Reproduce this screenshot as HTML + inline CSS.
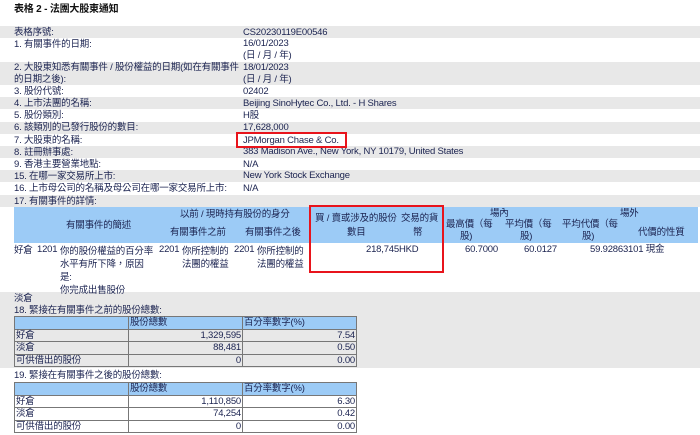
<!DOCTYPE html>
<html><head><meta charset="utf-8"><style>
*{margin:0;padding:0;box-sizing:border-box}
body{width:700px;height:435px;background:#fff;font-family:"Liberation Sans","Noto Sans CJK TC",sans-serif;font-size:9.5px;letter-spacing:-0.2px;color:#1b2350;position:relative;overflow:hidden;line-height:12px}
.a{position:absolute;white-space:nowrap}
.w{position:absolute;white-space:normal;line-height:13px}
.g{position:absolute;left:0;width:700px;background:#e8e8e8}
.b{position:absolute;background:#9ccbf6}
.red{position:absolute;border:2px solid #e8141c}
table{position:absolute;border-collapse:collapse;font-size:9.5px}
td{border:1px solid #777;height:12.5px;padding:0 1px;line-height:11px}
td.r{text-align:right}
tr.h td{background:#9ccbf6}
</style></head><body>
<div class="a" style="left:14px;top:4px;font-weight:bold;color:#111;font-size:10px">表格 2 - 法團大股東通知</div>
<div class="g" style="top:26px;height:12px"></div>
<div class="g" style="top:62px;height:23px"></div>
<div class="g" style="top:97px;height:12px"></div>
<div class="g" style="top:122px;height:12px"></div>
<div class="g" style="top:146px;height:12px"></div>
<div class="g" style="top:170px;height:12px"></div>
<div class="g" style="top:195px;height:12px"></div>
<div class="g" style="top:292px;height:76px"></div>

<div class="a" style="left:14px;top:27px">表格序號:</div><div class="a" style="left:243px;top:27px">CS20230119E00546</div>
<div class="a" style="left:14px;top:39px">1. 有關事件的日期:</div><div class="a" style="left:243px;top:38px">16/01/2023<br>(日 / 月 / 年)</div>
<div class="a" style="left:14px;top:62px">2. 大股東知悉有關事件 / 股份權益的日期(如在有關事件<br>的日期之後):</div><div class="a" style="left:243px;top:62px">18/01/2023<br>(日 / 月 / 年)</div>
<div class="a" style="left:14px;top:86px">3. 股份代號:</div><div class="a" style="left:243px;top:86px">02402</div>
<div class="a" style="left:14px;top:98px">4. 上市法團的名稱:</div><div class="a" style="left:243px;top:98px">Beijing SinoHytec Co., Ltd. - H Shares</div>
<div class="a" style="left:14px;top:110px">5. 股份類別:</div><div class="a" style="left:243px;top:110px">H股</div>
<div class="a" style="left:14px;top:122px">6. 該類別的已發行股份的數目:</div><div class="a" style="left:243px;top:122px">17,628,000</div>
<div class="a" style="left:14px;top:135px">7. 大股東的名稱:</div><div class="a" style="left:243px;top:135px">JPMorgan Chase &amp; Co.</div>
<div class="a" style="left:14px;top:147px">8. 註冊辦事處:</div><div class="a" style="left:243px;top:146px">383 Madison Ave., New York, NY 10179, United States</div>
<div class="a" style="left:14px;top:159px">9. 香港主要營業地點:</div><div class="a" style="left:243px;top:159px">N/A</div>
<div class="a" style="left:14px;top:171px">15. 在哪一家交易所上市:</div><div class="a" style="left:243px;top:170px">New York Stock Exchange</div>
<div class="a" style="left:14px;top:183px">16. 上市母公司的名稱及母公司在哪一家交易所上市:</div><div class="a" style="left:243px;top:183px">N/A</div>
<div class="a" style="left:14px;top:196px">17. 有關事件的詳情:</div>
<div class="red" style="left:236px;top:132px;width:111px;height:16px"></div>

<div class="b" style="left:14px;top:207px;width:684px;height:36px"></div>
<div class="a" style="left:66px;top:220px">有關事件的簡述</div>
<div class="a" style="left:180px;top:209px">以前 / 現時持有股份的身分</div>
<div class="a" style="left:170px;top:227px">有關事件之前</div>
<div class="a" style="left:245px;top:227px">有關事件之後</div>
<div class="a" style="left:315px;top:213px">買 / 賣或涉及的股份</div>
<div class="a" style="left:347px;top:227px">數目</div>
<div class="a" style="left:401px;top:213px">交易的貨</div>
<div class="a" style="left:413px;top:227px">幣</div>
<div class="a" style="left:490px;top:208px">場內</div>
<div class="a" style="left:446px;top:219px">最高價（每</div><div class="a" style="left:460px;top:231px">股)</div>
<div class="a" style="left:505px;top:219px">平均價（每</div><div class="a" style="left:520px;top:231px">股)</div>
<div class="a" style="left:562px;top:219px">平均代價（每</div><div class="a" style="left:582px;top:231px">股)</div>
<div class="a" style="left:620px;top:208px">場外</div>
<div class="a" style="left:638px;top:227px">代價的性質</div>

<div class="a" style="left:14px;top:245px">好倉</div>
<div class="a" style="left:37px;top:244px">1201</div>
<div class="w" style="left:60px;top:245px;width:94px">你的股份權益的百分率<br>水平有所下降，原因<br>是:<br>你完成出售股份</div>
<div class="a" style="left:159px;top:244px">2201</div>
<div class="w" style="left:182px;top:245px;width:50px">你所控制的<br>法團的權益</div>
<div class="a" style="left:234px;top:244px">2201</div>
<div class="w" style="left:257px;top:245px;width:50px">你所控制的<br>法團的權益</div>
<div class="a" style="left:366px;top:244px">218,745HKD</div>
<div class="a" style="left:465px;top:244px">60.7000</div>
<div class="a" style="left:524px;top:244px">60.0127</div>
<div class="a" style="left:590px;top:244px">59.92863101 現金</div>
<div class="red" style="left:309px;top:205px;width:135px;height:68px"></div>

<div class="a" style="left:14px;top:293px">淡倉</div>
<div class="a" style="left:14px;top:305px">18. 緊接在有關事件之前的股份總數:</div>
<table style="left:14px;top:316px;width:343px">
<tr class="h"><td style="width:114px"></td><td style="width:114px">股份總數</td><td>百分率數字(%)</td></tr>
<tr><td>好倉</td><td class="r">1,329,595</td><td class="r">7.54</td></tr>
<tr><td>淡倉</td><td class="r">88,481</td><td class="r">0.50</td></tr>
<tr><td>可供借出的股份</td><td class="r">0</td><td class="r">0.00</td></tr>
</table>
<div class="a" style="left:14px;top:370px">19. 緊接在有關事件之後的股份總數:</div>
<table style="left:14px;top:382px;width:343px">
<tr class="h"><td style="width:114px"></td><td style="width:114px">股份總數</td><td>百分率數字(%)</td></tr>
<tr><td>好倉</td><td class="r">1,110,850</td><td class="r">6.30</td></tr>
<tr><td>淡倉</td><td class="r">74,254</td><td class="r">0.42</td></tr>
<tr><td>可供借出的股份</td><td class="r">0</td><td class="r">0.00</td></tr>
</table>
</body></html>
